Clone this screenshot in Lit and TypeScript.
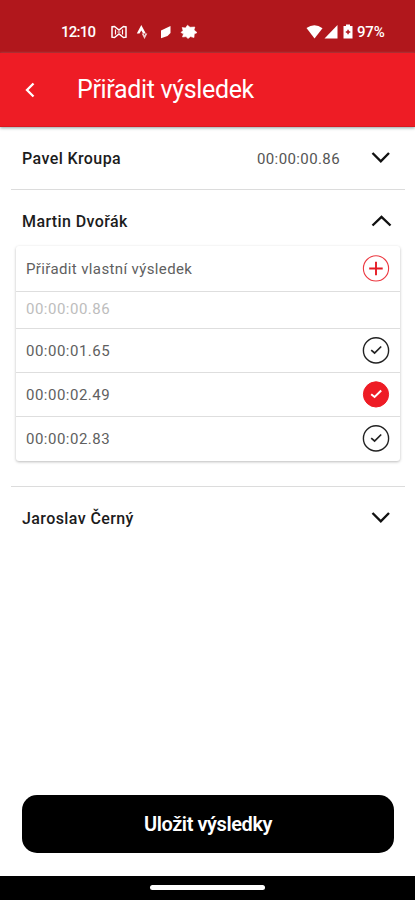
import { LitElement, html, css, svg, nothing } from "lit";
import { customElement, property } from "lit/decorators.js";
import { classMap } from "lit/directives/class-map.js";

@customElement("status-bar")
class StatusBar extends LitElement {
  static styles = css`
    :host {
      display: flex;
      box-sizing: border-box;
      height: 53px;
      padding: 11px 29px 0 61px;
      align-items: center;
      background: #b1171c;
      color: #fff;
      font: 500 15px/20px Roboto, sans-serif;
    }
    svg { display: block; fill: currentColor; flex: none; }
    .time { width: 50px; letter-spacing: -0.75px; }
    .apps { margin-right: auto; }
    .battery { letter-spacing: -0.2px; width: 29px; margin-left: 1px; }
  `;
  render() {
    return html`
      <span class="time">12:10</span>
      <svg class="apps" width="90" height="18" viewBox="0 0 90 18">
        <path d="M1 3.800 3.500 3.500 8 7 12.500 3.500 15 3.800V14.200L12.500 14.500 8 11 3.500 14.500 1 14.200Z" fill="none" stroke="#fff" stroke-width="1.500" />
        <path d="M4.500 6.500v5M11.500 6.500v5M6.500 9h3" stroke="#fff" stroke-width="1.200" />
        <path d="M30.300 2 34.800 10.400H32.100L30.300 7.400 28.500 10.400H25.800Z" />
        <path d="M30.700 10.600H32.700L33.500 12.400 34.300 10.600H36.300L33.500 16Z" opacity=".8" />
        <path d="M50 7.500 59.500 3V10L56.500 13 50 15.200Z" />
        <path d="M76.500 2.200 79 4.300 83.800 4 83 7 86 9.600 83.200 11 83 14.500 79.500 13.600 77 15.500 75 13.600 71.500 14 72.500 10.800 70 9.500 72 7.500 71.200 4.500 74.500 5Z" stroke="#fff" stroke-width=".6" stroke-linejoin="round" />
      </svg>
      <svg width="54" height="16" viewBox="0 0 54 16">
        <path d="M4.500 4Q12.500 -1.500 20.500 4.200L12.500 14.500Z" />
        <path d="M35.500 1V14.500H22.500Z" />
        <path fill-rule="evenodd" d="M44 .5h4v1.500h2.500v12.500h-9V2H44ZM43.800 8.800h1.500v1.500h1.500v-1.500h1.500V7.300h-1.500V5.800h-1.500v1.500h-1.500Z" />
      </svg>
      <span class="battery">97%</span>
    `;
  }
}

@customElement("title-bar")
class TitleBar extends LitElement {
  static styles = css`
    :host {
      display: flex;
      box-sizing: border-box;
      height: 74px;
      padding-left: 23px;
      align-items: center;
      background: #ee1c25;
      border-bottom: 1px solid #d91820;
      box-shadow: 0 1px 3px #8fa2a2;
      color: #fff;
      position: relative;
    }
    svg { display: block; margin-right: 38px; }
    h1 { margin: 0; font: 400 25px/30px Roboto, sans-serif; letter-spacing: -0.34px; }
  `;
  render() {
    return html`
      <svg width="16" height="18" viewBox="0 0 16 18"><path d="M10.500 2.500 4 9 10.500 15.500" fill="none" stroke="#fff" stroke-width="2.300" /></svg>
      <h1>Přiřadit výsledek</h1>
    `;
  }
}

@customElement("result-icon")
class ResultIcon extends LitElement {
  @property() kind = "open";
  static styles = css`
    :host, svg { display: block; }
    svg { fill: none; }
  `;
  render() {
    const plus = this.kind === "plus";
    const chosen = this.kind === "chosen";
    const mark = plus
      ? svg`<path d="M14 6.800v13.500M7.200 13.500h13.500" stroke="#e51b24" stroke-width="1.900" />`
      : svg`<path d="M9.200 13.200 12.600 16 19.200 9.500" stroke=${chosen ? "#fff" : "#222"} stroke-width=${chosen ? 2 : 1.7} />`;
    return html`<svg width="28" height="28" viewBox="0 0 28 28">
      <circle cx="14" cy="13.400" r="12.600" stroke=${plus ? "#ec3941" : chosen ? "#ee1c25" : "#222"} stroke-width=${plus ? 1.1 : chosen ? 1 : 1.4} fill=${chosen ? "#ee1c25" : "none"} />
      ${mark}
    </svg>`;
  }
}

interface Option { label: string; icon?: string; }

@customElement("runner-row")
class RunnerRow extends LitElement {
  @property() name = "";
  @property() time = "";
  @property({ attribute: false }) options?: Option[];
  static styles = css`
    :host { display: block; font-family: Roboto, sans-serif; }
    .head { display: flex; box-sizing: border-box; height: 62px; align-items: center; padding: 1px 13px 0 11px; }
    .head.open { height: 56px; padding-top: 7px; }
    .name { flex: 1; font-size: 16px; font-weight: 500; line-height: 20px; letter-spacing: 0.4px; color: #1c1c1c; }
    .time { font-size: 15px; line-height: 20px; letter-spacing: 0.4px; color: #555; margin-right: 30px; }
    .chevron { display: block; fill: none; stroke: #111; stroke-width: 2.4; margin-bottom: 1px; }
    .card {
      margin: 0 5px 25px;
      border-radius: 3px;
      background: #fff;
      box-shadow: 0 1px 3px rgba(0, 0, 0, 0.27);
    }
    .option {
      display: flex;
      box-sizing: border-box;
      height: 44px;
      padding: 0 10px;
      align-items: center;
      justify-content: space-between;
      font-size: 15px;
      line-height: 20px;
      letter-spacing: 0.5px;
      color: #606060;
      border-bottom: 1px solid #dedede;
    }
    .option.own { height: 46px; letter-spacing: 0.37px; }
    .option.used { height: 37px; color: #bdbdbd; }
    .option.used span { margin-top: -2px; }
    .option:last-child { border-bottom: 0; }
  `;
  render() {
    return html`
      <div class=${classMap({ head: true, open: !!this.options })}>
        <span class="name">${this.name}</span>
        ${this.time ? html`<span class="time">${this.time}</span>` : nothing}
        <svg class="chevron" width="22" height="14" viewBox="0 0 22 14">
          <path d=${this.options ? "M2.500 11.500 11.500 2.800 20.500 11.500" : "M2.500 2 10.800 10.300 19 2"} />
        </svg>
      </div>
      ${this.options
        ? html`<div class="card">
            ${this.options.map(
              (o) => html`<div class=${classMap({ option: true, own: o.icon === "plus", used: !o.icon })}>
                <span>${o.label}</span>
                ${o.icon ? html`<result-icon kind=${o.icon}></result-icon>` : nothing}
              </div>`
            )}
          </div>`
        : nothing}
    `;
  }
}

@customElement("app-root")
class AppRoot extends LitElement {
  static styles = css`
    :host { display: flex; flex-direction: column; height: 900px; background: #fff; font-family: Roboto, sans-serif; }
    main { flex: 1; padding: 0 10px 0 11px; }
    runner-row + runner-row { border-top: 1px solid #dcdcdc; }
    .save {
      height: 58px;
      margin: 0 21px 23px 22px;
      padding: 0;
      border: 0;
      border-radius: 15px;
      background: #000;
      color: #fff;
      font: 600 20px/24px Roboto, sans-serif;
      letter-spacing: -0.42px;
    }
    .nav { display: flex; box-sizing: border-box; height: 24px; padding-bottom: 1px; align-items: center; justify-content: center; background: #000; }
    .pill { width: 115px; height: 5px; border-radius: 3px; background: #fff; }
  `;
  options: Option[] = [
    { label: "Přiřadit vlastní výsledek", icon: "plus" },
    { label: "00:00:00.86" },
    { label: "00:00:01.65", icon: "open" },
    { label: "00:00:02.49", icon: "chosen" },
    { label: "00:00:02.83", icon: "open" },
  ];
  render() {
    return html`
      <status-bar></status-bar>
      <title-bar></title-bar>
      <main>
        <runner-row name="Pavel Kroupa" time="00:00:00.86"></runner-row>
        <runner-row name="Martin Dvořák" .options=${this.options}></runner-row>
        <runner-row name="Jaroslav Černý"></runner-row>
      </main>
      <button class="save">Uložit výsledky</button>
      <div class="nav"><div class="pill"></div></div>
    `;
  }
}
